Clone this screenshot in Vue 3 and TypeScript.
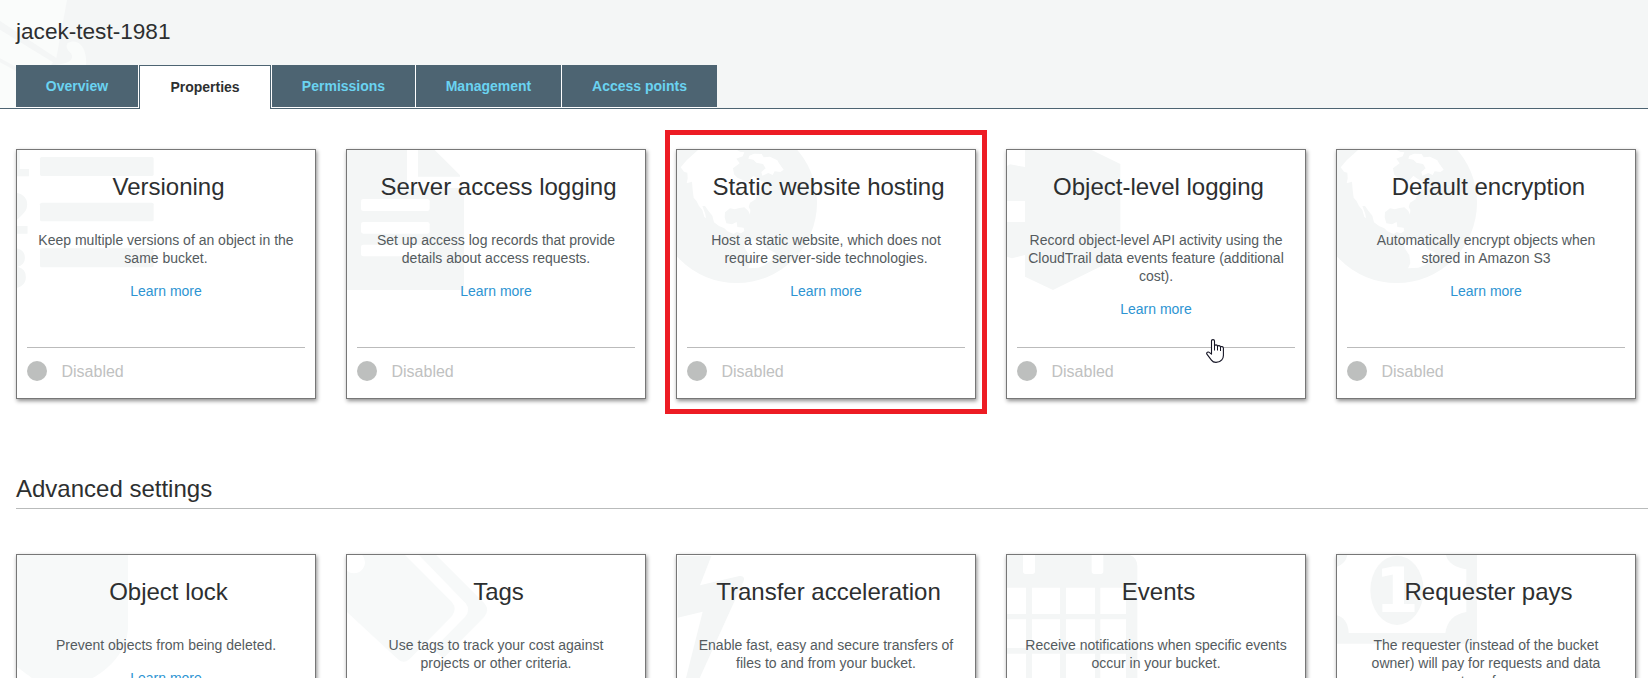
<script setup lang="ts">
interface Card {
  title: string
  text: string
  icon: string
  highlighted?: boolean
}

const tabs: { label: string; width: number; active?: boolean }[] = [
  { label: 'Overview', width: 122 },
  { label: 'Properties', width: 132, active: true },
  { label: 'Permissions', width: 143 },
  { label: 'Management', width: 145 },
  { label: 'Access points', width: 155 },
]

const mainCards: Card[] = [
  { title: 'Versioning', text: 'Keep multiple versions of an object in the same bucket.', icon: 'list' },
  { title: 'Server access logging', text: 'Set up access log records that provide details about access requests.', icon: 'document' },
  { title: 'Static website hosting', text: 'Host a static website, which does not require server-side technologies.', icon: 'globe', highlighted: true },
  { title: 'Object-level logging', text: 'Record object-level API activity using the CloudTrail data events feature (additional cost).', icon: 'trail' },
  { title: 'Default encryption', text: 'Automatically encrypt objects when stored\u00a0in Amazon S3', icon: 'globe' },
]

const advancedCards: Card[] = [
  { title: 'Object lock', text: 'Prevent objects from being deleted.', icon: 'lock' },
  { title: 'Tags', text: 'Use tags to track your cost against projects or other criteria.', icon: 'tags' },
  { title: 'Transfer acceleration', text: 'Enable fast, easy and secure transfers of files to and from your bucket.', icon: 'bolt' },
  { title: 'Events', text: 'Receive notifications when specific events occur in your bucket.', icon: 'calendar' },
  { title: 'Requester pays', text: 'The requester (instead of the bucket owner) will pay for requests and data transfer.', icon: 'bill' },
]

const sections = [
  { heading: '', cards: mainCards },
  { heading: 'Advanced settings', cards: advancedCards },
]
</script>

<template>
  <div class="page">
    <header class="header">
      <svg class="header-art" width="100" height="108" viewBox="0 0 300 324" aria-hidden="true">
        <path fill="#fafcfb" d="M0 0H201L169 174L0 63Z" />
        <path fill="#fafcfb" d="M0 89L159 187L150 200H48L0 175Z" />
        <path fill="#fafcfb" d="M0 187L48 213V324H0Z" />
        <path fill="#fafcfb" d="M202 130C225 116 245 130 253 152C259 168 259 182 258 197H150L185 192C210 188 222 175 214 162C206 152 195 146 202 130Z" />
      </svg>
      <h1 class="bucket">jacek-test-1981</h1>
      <nav class="tabs">
        <a
          v-for="tab in tabs"
          :key="tab.label"
          class="tab"
          :class="{ active: tab.active }"
          :style="{ width: tab.width + 'px' }"
        >{{ tab.label }}</a>
      </nav>
    </header>

    <main>
      <section v-for="(section, i) in sections" :key="i" class="section">
        <h2 v-if="section.heading" class="heading">{{ section.heading }}</h2>
        <div class="cards">
          <article v-for="card in section.cards" :key="card.title" class="card">
            <svg class="art" width="298" height="248" viewBox="0 0 894 744" aria-hidden="true">
              <g v-if="card.icon === 'list'" transform="translate(-51 -60)">
                <rect x="120" y="81" width="341" height="57" rx="5" />
                <rect x="120" y="218" width="341" height="56" rx="5" />
                <rect x="120" y="355" width="341" height="57" rx="5" />
                <g class="digits" font-size="166">
                  <text x="-17" y="137">1</text>
                  <text x="-19" y="308">2</text>
                  <text x="-25" y="475">3</text>
                </g>
              </g>
              <g v-else-if="card.icon === 'document'" transform="translate(-51 -60)">
                <path d="M51 60H231V174H402V480H51Z M264 60H314L390 136V140H264Z" />
                <g class="cut">
                  <rect x="93" y="207" width="206" height="36" rx="7" />
                  <rect x="93" y="276" width="206" height="35" rx="7" />
                  <rect x="93" y="344" width="206" height="35" rx="7" />
                </g>
              </g>
              <g v-else-if="card.icon === 'globe'" transform="translate(-51 -60)">
                <circle cx="230" cy="218" r="241" />
                <path class="cut" d="M114 60L80 91L62 112L72 125L82 128L83 145L80 160L96 155L98 180L101 203L110 214L117 228L127 240L133 261L138 265L136 252L127 228L135 228L145 242L157 257L162 277L177 288L193 295L202 304L221 312L230 306L243 310L253 303L251 293L232 291L230 276L216 283L199 280L194 262L195 247L210 235L224 238L238 234L253 232L265 243L270 254L271 239L266 231L270 218L287 208L291 194L302 184L313 176L315 158L303 152L290 145L280 137L271 148L263 157L250 151L232 143L222 133L219 115L239 100L229 86L248 79L253 67L240 65L231 60Z M268 77L282 71L305 72L311 82L330 80L352 91L357 100L371 119L361 126L344 124L338 135L325 129L307 137L304 126L317 115L309 102L289 98L280 89L265 86Z M257 328L276 328L294 334L314 344L322 356L348 370L334 390L315 405L295 413L264 415L271 400L268 376L256 358L251 344Z" />
              </g>
              <g v-else-if="card.icon === 'trail'" transform="translate(-51 -60)">
                <path d="M105 60H305L391 102V380L189 480L105 440V375L66 385L51 380V276H105V213H51V108L60 103L105 111Z" />
              </g>
              <g v-else-if="card.icon === 'lock'" class="light" transform="translate(-51 -285)">
                <path d="M51 285H384V500C384 570 330 625 278 654C240 678 205 708 168 728C145 690 105 660 51 621Z" />
              </g>
              <g v-else-if="card.icon === 'tags'" class="light" transform="translate(-51 -75)">
                <path d="M51 75H225L366 217Q382 237 366 258L238 388Q221 403 204 388L51 246Z M267 75H318L463 220Q480 240 463 260L340 385L310 358L405 261Q423 241 407 220Z" />
                <circle class="cut" cx="72" cy="97" r="33" />
              </g>
              <g v-else-if="card.icon === 'bolt'" transform="translate(-51 -75)">
                <path d="M54 78H154L120 166L238 138Q256 137 251 153L119 444L95 500L70 480L78 444L128 245L53 263Z" />
              </g>
              <g v-else-if="card.icon === 'calendar'" transform="translate(-51 -75)">
                <path d="M51 75H420Q442 84 442 108V495H51Z" />
                <g class="cut">
                  <path d="M99 75H135V124Q135 132 127 132H107Q99 132 99 124Z M305 75H340V124Q340 132 332 132H313Q305 132 305 124Z" />
                  <path d="M51 173H108V252H51Z M126 173H210V252H126Z M228 173H315V252H228Z M331 173H408V252H331Z" />
                  <path d="M51 268H108V354H51Z M126 268H210V354H126Z M228 268H315V354H228Z M331 268H408V354H331Z" />
                  <path d="M51 371H108V457H51Z M126 371H210V457H126Z M228 371H315V457H228Z M331 371H408V457H331Z" />
                </g>
              </g>
              <g v-else-if="card.icon === 'bill'" transform="translate(-51 -195)">
                <path d="M51 195H471V461H51Z" />
                <path class="cut" d="M51 230Q78 220 82 195H378Q386 229 439 238V366Q384 375 376 429H86Q84 386 51 376Z" />
                <ellipse cx="231" cy="301" rx="80" ry="104" />
                <text class="digits cut" x="165" y="366" font-size="189">1</text>
              </g>
            </svg>
            <h3 class="title">{{ card.title }}</h3>
            <div class="body">
              <p>{{ card.text }}</p>
              <a class="link">Learn more</a>
            </div>
            <footer class="status"><span class="dot"></span>Disabled</footer>
            <div v-if="card.highlighted" class="frame"></div>
            <svg v-if="card.icon === 'trail'" class="pointer" width="18" height="24" viewBox="0 0 18 24" aria-hidden="true">
              <path fill="#fff" stroke="#151525" stroke-width="1.1" stroke-linejoin="round" d="M5.5 15.2V2Q5.5.6 7 .6T8.5 2V7Q8.6 5.9 10 5.9T11.5 7.5Q11.7 6.5 13 6.6T14.5 8.2Q14.8 7.4 16 7.6T17.4 9V16.5Q17.4 19 15.8 20.8Q13.7 23.4 10 23.4Q7 23.4 5.4 21.1L.9 15.2Q.2 13.8 1.4 13.2T3.6 13.6Z" />
              <path fill="none" stroke="#151525" stroke-width="1" d="M8.5 6.5V11.5M11.5 7V11.5M14.5 8V12" />
            </svg>
          </article>
        </div>
      </section>
    </main>
  </div>
</template>

<style>
html,
body {
  overflow: hidden;
  background: #fff;
}
</style>

<style scoped>
.page {
  height: 678px;
  overflow: hidden;
  background: #fff;
  font-family: 'Liberation Sans', Arial, sans-serif;
  color: #2d2f30;
}
h1,
h2,
h3,
p {
  margin: 0;
  font-weight: 400;
}
.header {
  position: relative;
  box-sizing: border-box;
  height: 109px;
  padding: 18px 16px 0;
  background: #f4f6f6;
  border-bottom: 1px solid #4d6472;
}
.header-art {
  position: absolute;
  left: 0;
  top: 0;
}
.bucket {
  position: relative;
  height: 47px;
  font-size: 22.6px;
  line-height: 28px;
}
.tabs {
  position: relative;
  display: flex;
  width: max-content;
  gap: 1px;
  height: 42px;
  background: #fff;
  border-bottom: 1px solid #fff;
}
.tab {
  height: 42px;
  box-sizing: border-box;
  background: #4d6472;
  color: #6ad3f1;
  font-size: 14px;
  font-weight: 700;
  line-height: 42px;
  text-align: center;
}
.tab.active {
  height: 44px;
  background: #fff;
  color: #2d2f30;
  border: 1px solid #4d6472;
  border-bottom: 0;
}
.section {
  padding: 40px 0 0 16px;
}
.section + .section {
  padding-top: 75px;
}
.heading {
  height: 34px;
  margin-bottom: 45px;
  border-bottom: 1px solid #b9bbbb;
  font-size: 24px;
  line-height: 30px;
}
.cards {
  display: flex;
  gap: 30px;
}
.card {
  position: relative;
  box-sizing: border-box;
  flex: 0 0 300px;
  height: 250px;
  padding: 0 10px;
  display: flex;
  flex-direction: column;
  border: 1px solid #777;
  background: #fff;
  box-shadow: 1px 2px 4px rgba(0, 0, 0, 0.45);
}
.art {
  position: absolute;
  left: 0;
  top: 0;
  fill: #f4f6f6;
}
.light {
  fill: #f7f9f9;
}
.cut {
  fill: #fff;
}
.digits {
  font-family: 'DejaVu Sans', sans-serif;
  font-weight: 700;
}
.title {
  position: relative;
  margin: 23px 0 0 5px;
  font-size: 24px;
  line-height: 28px;
  text-align: center;
}
.body {
  position: relative;
  flex: 1;
  padding: 30px 8px 0;
  color: #545b5e;
  font-size: 14px;
  line-height: 18px;
  text-align: center;
}
.link {
  display: block;
  margin-top: 15px;
  color: #2d94d2;
}
.status {
  position: relative;
  display: flex;
  align-items: center;
  height: 51px;
  padding-bottom: 3px;
  box-sizing: border-box;
  border-top: 1px solid #bbb;
  color: #bfc1c1;
  font-size: 16px;
}
.dot {
  width: 20px;
  height: 20px;
  margin: 0 14.5px 2px 0;
  border-radius: 50%;
  background: #bdbfbe;
}
.frame {
  position: absolute;
  left: -12px;
  top: -20px;
  width: 312px;
  height: 274px;
  border: 5px solid #ed1c24;
}
.pointer {
  position: absolute;
  left: 199px;
  top: 189px;
}
</style>
